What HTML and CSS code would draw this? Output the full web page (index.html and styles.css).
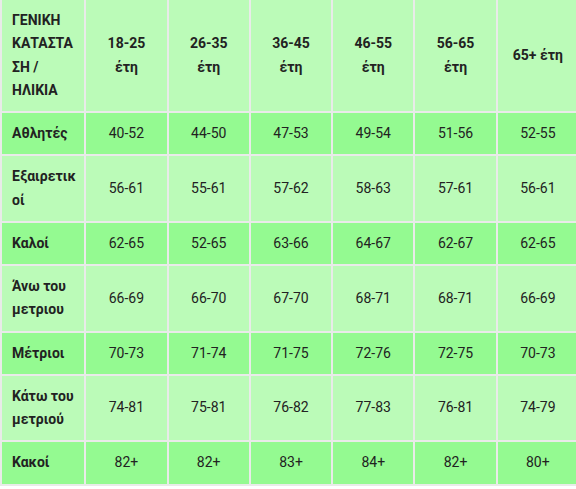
FILE: index.html
```html
<!DOCTYPE html>
<html lang="el">
<head>
<meta charset="utf-8">
<link rel="stylesheet" href="styles.css">
</head>
<body>
<table class="grid">
  <colgroup>
    <col class="c-first">
    <col class="c-age"><col class="c-age"><col class="c-age"><col class="c-age"><col class="c-age"><col class="c-age">
  </colgroup>
  <tr class="light head">
    <td class="label">ΓΕΝΙΚΗ ΚΑΤΑΣΤΑΣΗ / ΗΛΙΚΙΑ</td>
    <td>18-25 έτη</td><td>26-35 έτη</td><td>36-45 έτη</td><td>46-55 έτη</td><td>56-65 έτη</td><td>65+ έτη</td>
  </tr>
  <tr class="dark">
    <td class="label">Αθλητές</td><td>40-52</td><td>44-50</td><td>47-53</td><td>49-54</td><td>51-56</td><td>52-55</td>
  </tr>
  <tr class="light">
    <td class="label">Εξαιρετικοί</td><td>56-61</td><td>55-61</td><td>57-62</td><td>58-63</td><td>57-61</td><td>56-61</td>
  </tr>
  <tr class="dark">
    <td class="label">Καλοί</td><td>62-65</td><td>52-65</td><td>63-66</td><td>64-67</td><td>62-67</td><td>62-65</td>
  </tr>
  <tr class="light">
    <td class="label">Άνω του μετριου</td><td>66-69</td><td>66-70</td><td>67-70</td><td>68-71</td><td>68-71</td><td>66-69</td>
  </tr>
  <tr class="dark">
    <td class="label">Μέτριοι</td><td>70-73</td><td>71-74</td><td>71-75</td><td>72-76</td><td>72-75</td><td>70-73</td>
  </tr>
  <tr class="light">
    <td class="label">Κάτω του μετριού</td><td>74-81</td><td>75-81</td><td>76-82</td><td>77-83</td><td>76-81</td><td>74-79</td>
  </tr>
  <tr class="dark">
    <td class="label">Κακοί</td><td>82+</td><td>82+</td><td>83+</td><td>84+</td><td>82+</td><td>80+</td>
  </tr>
</table>
</body>
</html>
```
FILE: styles.css
```css
html, body {
  margin: 0;
  padding: 0;
  background: #ffffff;
}

.grid {
  border-collapse: separate;
  border-spacing: 0;
  table-layout: fixed;
  width: 578px;
  font-family: Roboto, "Liberation Sans", sans-serif;
  font-size: 14px;
  line-height: 23.25px;
  color: #222222;
}

.c-first { width: 84px; }
.c-age { width: 82px; }

.grid td {
  border-left: 2px solid #e9ebe9;
  border-bottom: 2px solid #e9ebe9;
  padding: 9px 10px;
  text-align: center;
  vertical-align: middle;
  overflow-wrap: anywhere;
  word-break: break-word;
}

.grid td.label {
  text-align: left;
  font-weight: bold;
  padding-right: 8px;
}

.head td {
  font-weight: bold;
}

.light td { background: #bbfbb8; }
.dark td { background: #94fa91; }
```
